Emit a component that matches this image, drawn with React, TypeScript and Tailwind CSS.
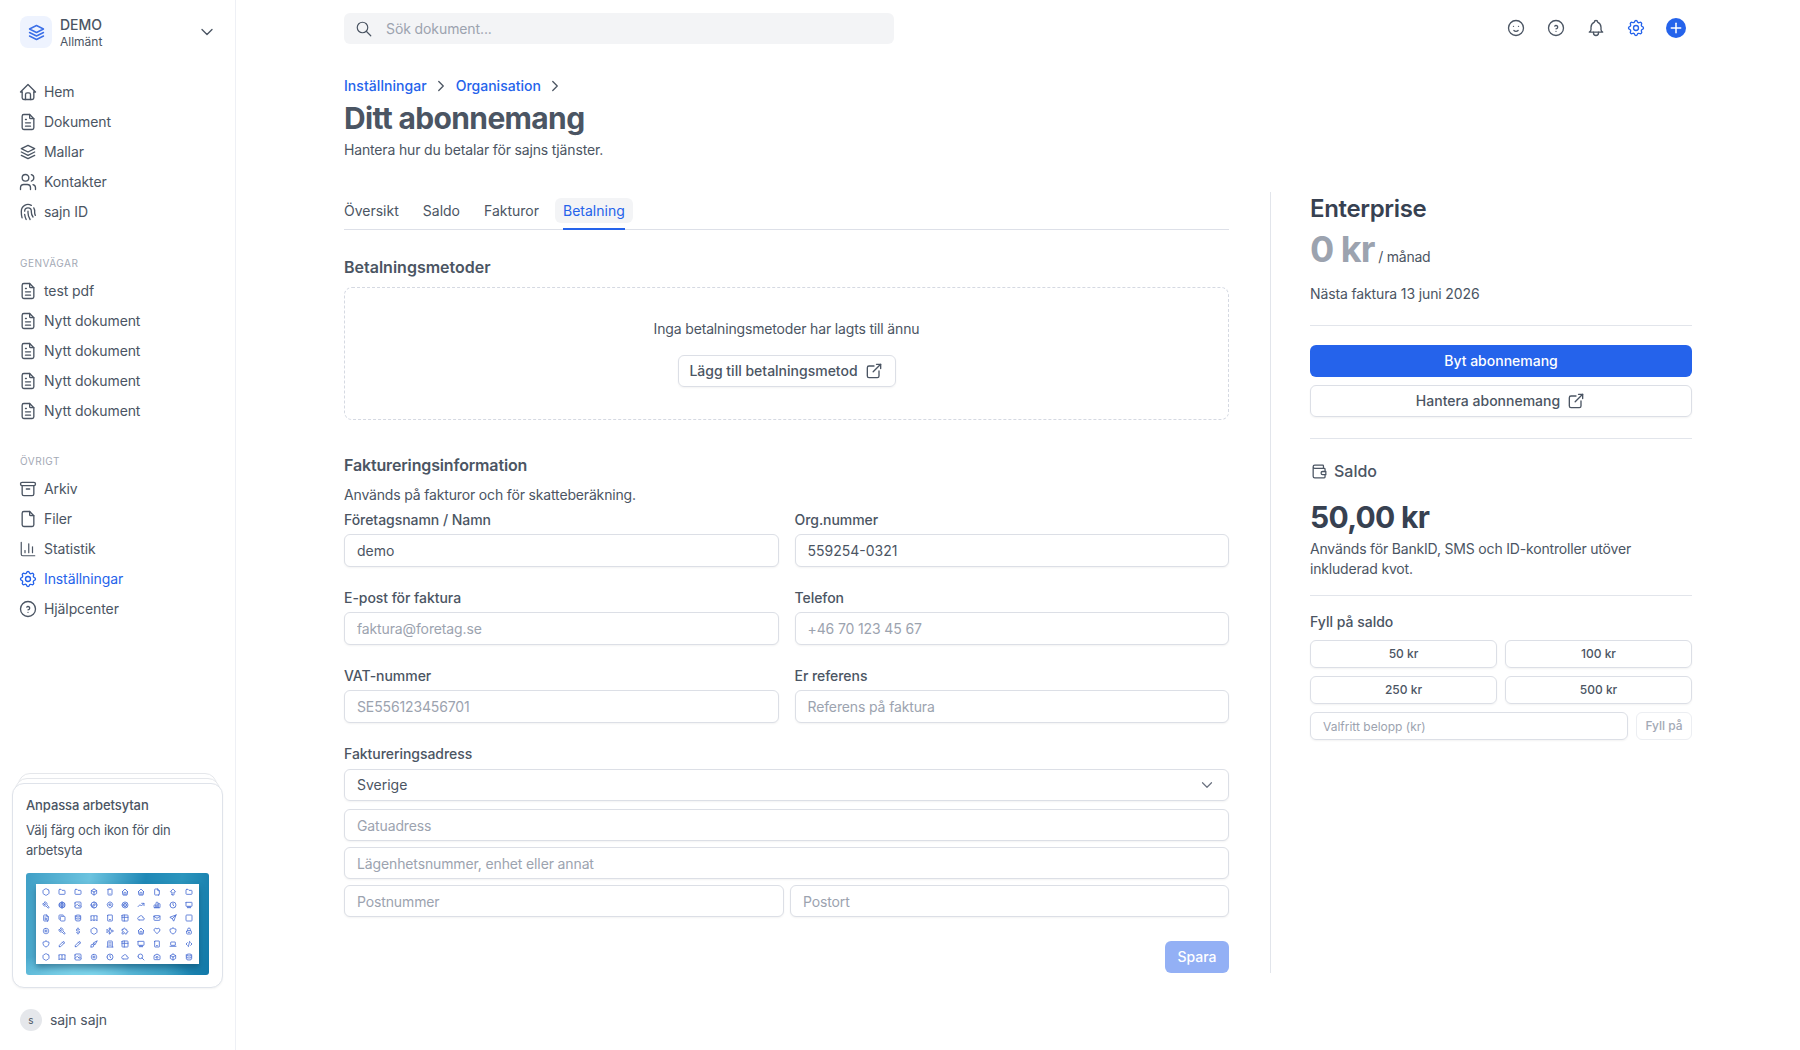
import {
  TbArchive,
  TbArrowBigUp,
  TbBell,
  TbBook,
  TbBox,
  TbBrush,
  TbBuilding,
  TbCamera,
  TbChartBar,
  TbChevronDown,
  TbChevronRight,
  TbClock,
  TbCloud,
  TbCode,
  TbCompass,
  TbCopy,
  TbCurrencyDollar,
  TbDatabase,
  TbDeviceDesktop,
  TbDeviceLaptop,
  TbDeviceMobile,
  TbDeviceTablet,
  TbExternalLink,
  TbFile,
  TbFileText,
  TbFingerprint,
  TbFolder,
  TbHeart,
  TbHelpCircle,
  TbHexagon,
  TbHome,
  TbLock,
  TbMail,
  TbMapPin,
  TbMoodSmile,
  TbPencil,
  TbPhoto,
  TbPlane,
  TbPlus,
  TbPuzzle,
  TbSearch,
  TbSend,
  TbSettings,
  TbShield,
  TbSquare,
  TbStack2,
  TbTable,
  TbTarget,
  TbTool,
  TbTrendingUp,
  TbUsers,
  TbWallet,
  TbWorld,
} from "react-icons/tb";
import { ChartColumn } from "lucide-react";

const mainNav = [
  { label: "Hem", icon: TbHome },
  { label: "Dokument", icon: TbFileText },
  { label: "Mallar", icon: TbStack2 },
  { label: "Kontakter", icon: TbUsers },
  { label: "sajn ID", icon: TbFingerprint },
];

const shortcuts = ["test pdf", "Nytt dokument", "Nytt dokument", "Nytt dokument", "Nytt dokument"];

const otherNav = [
  { label: "Arkiv", icon: TbArchive },
  { label: "Filer", icon: TbFile },
  { label: "Statistik", icon: ChartColumn },
  { label: "Inställningar", icon: TbSettings, active: true },
  { label: "Hjälpcenter", icon: TbHelpCircle },
];

const thumbIcons = [
  TbHexagon, TbFolder, TbFolder, TbBox, TbDeviceMobile, TbHome, TbHome, TbFile, TbArrowBigUp, TbFolder,
  TbTool, TbWorld, TbPhoto, TbCompass, TbMapPin, TbTarget, TbTrendingUp, TbChartBar, TbClock, TbDeviceDesktop,
  TbFileText, TbCopy, TbDatabase, TbBook, TbDeviceTablet, TbTable, TbCloud, TbMail, TbSend, TbSquare,
  TbSettings, TbTool, TbCurrencyDollar, TbHexagon, TbPlane, TbPuzzle, TbHome, TbHeart, TbShield, TbLock,
  TbShield, TbPencil, TbPencil, TbBrush, TbBuilding, TbTable, TbDeviceDesktop, TbDeviceTablet, TbDeviceLaptop, TbCode,
  TbHexagon, TbBook, TbPhoto, TbSettings, TbClock, TbCloud, TbSearch, TbCamera, TbBox, TbDatabase,
];

function NavItem({ label, icon: Icon, active }: { label: string; icon: any; active?: boolean }) {
  const small = Icon === ChartColumn;
  return (
    <a className={`flex h-[30px] items-center gap-[6px] text-sm tracking-[-0.1px] ${active ? "text-[#2563eb]" : "text-[#4b5563]"}`}>
      <span className="-ml-[2px] flex w-5 shrink-0 justify-center">
        <Icon size={small ? 18 : 20} strokeWidth={1.6} />
      </span>
      {label}
    </a>
  );
}

function SectionLabel({ children }: { children: string }) {
  return <div className="mt-[27px] mb-[5px] text-[10px] leading-4 tracking-[0.05em] text-[#a3a9b5]">{children}</div>;
}

function Sidebar() {
  return (
    <aside className="flex h-screen w-[236px] shrink-0 flex-col border-r border-[#eef0f5]">
      <div className="px-5 pt-4">
        <div className="flex h-8 items-center">
          <div className="flex h-8 w-8 items-center justify-center rounded-lg bg-[#eef3fe] text-[#3b6fe8]">
            <TbStack2 size={21} strokeWidth={1.6} />
          </div>
          <div className="ml-2 flex-1">
            <div className="text-sm leading-[18px] font-medium text-[#4b5563]">DEMO</div>
            <div className="mt-px text-xs leading-[14px] text-[#4b5563]">Allmänt</div>
          </div>
          <TbChevronDown size={20} strokeWidth={1.6} className="-mr-[2px] text-[#4b5563]" />
        </div>
        <nav className="mt-[29px]">
          {mainNav.map((item) => (
            <NavItem key={item.label} {...item} />
          ))}
        </nav>
        <div className="h-px" />
        <SectionLabel>GENVÄGAR</SectionLabel>
        {shortcuts.map((label, i) => (
          <NavItem key={i} label={label} icon={TbFileText} />
        ))}
        <SectionLabel>ÖVRIGT</SectionLabel>
        {otherNav.map((item) => (
          <NavItem key={item.label} {...item} />
        ))}
      </div>

      <div className="mt-auto px-3 pb-[19px]">
        <div className="relative">
          <div className="absolute -top-[10px] right-[6px] left-[6px] h-8 rounded-xl border border-[#e5e7eb] bg-white" />
          <div className="absolute -top-[5px] right-[3px] left-[3px] h-8 rounded-xl border border-[#e5e7eb] bg-white" />
          <div className="relative h-[205px] rounded-xl border border-[#dfe3ea] bg-white px-[13px] pt-[11px] shadow-xs">
            <div className="text-[13px] leading-5 font-medium tracking-[-0.1px] text-[#4b5563]">Anpassa arbetsytan</div>
            <p className="mt-[5px] text-[13px] leading-5 tracking-[-0.18px] text-[#4b5563]">Välj färg och ikon för din arbetsyta</p>
            <div className="mt-[13px] h-[102px] rounded-[3px] bg-[radial-gradient(ellipse_55%_22%_at_35%_100%,#7fd6ec_0%,transparent_100%),linear-gradient(100deg,#3f9fc6_0%,#6cc3df_32%,#1f88b6_60%,#2b95bd_78%,#1178a8_100%)] pt-[11px] pl-[10px]">
              <div className="grid h-[80px] w-[163px] grid-cols-10 grid-rows-6 items-center justify-items-center bg-white px-[2px] py-[1px] text-[#4a6fd4] shadow-[0_4px_6px_rgba(10,60,90,0.45)]">
                {thumbIcons.map((Icon, i) => (
                  <Icon key={i} size={8} strokeWidth={2.5} />
                ))}
              </div>
            </div>
          </div>
        </div>
        <div className="mt-[21px] flex h-[22px] items-center gap-2 pl-2">
          <div className="flex h-[22px] w-[22px] items-center justify-center rounded-full bg-[#e5e7eb] text-[10px] text-[#4b5563]">s</div>
          <span className="text-sm tracking-[-0.1px] text-[#4b5563]">sajn sajn</span>
        </div>
      </div>
    </aside>
  );
}

function TopBar() {
  return (
    <div className="flex h-[57px] items-center justify-between pr-[104px]">
      <div className="flex h-[31px] w-[550px] items-center gap-[13px] rounded-md bg-[#f3f4f6] pl-[11px] text-sm tracking-[-0.1px] text-[#9ca3af]">
        <TbSearch size={18} strokeWidth={1.6} className="text-[#4b5563]" />
        Sök dokument...
      </div>
      <div className="mb-[2px] flex text-[#4b5563]">
        <span className="flex h-10 w-10 items-center justify-center"><TbMoodSmile size={20} strokeWidth={1.6} /></span>
        <span className="flex h-10 w-10 items-center justify-center"><TbHelpCircle size={20} strokeWidth={1.6} /></span>
        <span className="flex h-10 w-10 items-center justify-center"><TbBell size={20} strokeWidth={1.6} /></span>
        <span className="flex h-10 w-10 items-center justify-center text-[#2563eb]"><TbSettings size={20} strokeWidth={1.6} /></span>
        <span className="flex h-10 w-10 items-center justify-center">
          <span className="flex h-5 w-5 items-center justify-center rounded-full bg-[#2563eb] text-white">
            <TbPlus size={16} strokeWidth={2.25} />
          </span>
        </span>
      </div>
    </div>
  );
}

function Tabs() {
  const tabs = ["Översikt", "Saldo", "Fakturor", "Betalning"];
  return (
    <div className="flex h-[38px] gap-6 border-b border-[#dde0e8]">
      {tabs.map((tab) => {
        const active = tab === "Betalning";
        return (
          <div key={tab} className={`h-[38px] border-b-2 pt-[6px] text-sm ${active ? "border-[#2563eb] text-[#2563eb]" : "border-transparent text-[#4b5563]"}`}>
            <span className={`-mx-2 block h-[25px] rounded-md px-2 leading-[26px] ${active ? "bg-[#f3f4f6]" : ""}`}>{tab}</span>
          </div>
        );
      })}
    </div>
  );
}

function TextInput({ placeholder, value, className = "h-[33px]" }: { placeholder?: string; value?: string; className?: string }) {
  return (
    <input
      readOnly
      placeholder={placeholder}
      value={value}
      className={`w-full rounded-md border border-[#dcdfe6] bg-white px-[12px] text-sm text-[#4b5563] shadow-xs outline-none placeholder:tracking-[-0.13px] placeholder:text-[#9ca3af] ${className}`}
    />
  );
}

function Field({ label, placeholder, value, className }: { label: string; placeholder?: string; value?: string; className?: string }) {
  return (
    <div className={className}>
      <div className="mb-[4px] text-sm leading-5 font-medium tracking-[-0.05px] text-[#4b5563]">{label}</div>
      <TextInput placeholder={placeholder} value={value} />
    </div>
  );
}

function BillingForm() {
  return (
    <div className="w-[885px] shrink-0">
      <Tabs />
      <h2 className="mt-[25px] text-base leading-6 font-semibold text-[#4b5563]">Betalningsmetoder</h2>
      <div className="mt-2 flex h-[133px] flex-col items-center rounded-lg border border-dashed border-[#d5d9e2] pt-[31px]">
        <p className="text-sm leading-5 tracking-[-0.16px] text-[#4b5563]">Inga betalningsmetoder har lagts till ännu</p>
        <button className="mt-4 flex h-8 w-[218px] items-center justify-center gap-[6px] rounded-md border border-[#dcdfe6] text-sm font-medium text-[#4b5563] shadow-xs">
          Lägg till betalningsmetod
          <TbExternalLink size={20} strokeWidth={1.6} />
        </button>
      </div>

      <h2 className="mt-[33px] text-base leading-6 font-semibold tracking-[-0.15px] text-[#4b5563]">Faktureringsinformation</h2>
      <p className="mt-2 text-sm leading-5 tracking-[-0.16px] text-[#4b5563]">Används på fakturor och för skatteberäkning.</p>

      <div className="mt-[5px] grid grid-cols-2 gap-x-4 gap-y-[21px]">
        <Field label="Företagsnamn / Namn" value="demo" />
        <Field label="Org.nummer" value="559254-0321" />
        <Field label="E-post för faktura" placeholder="faktura@foretag.se" />
        <Field label="Telefon" placeholder="+46 70 123 45 67" />
        <Field label="VAT-nummer" placeholder="SE556123456701" />
        <Field label="Er referens" placeholder="Referens på faktura" />
      </div>

      <div className="mt-[21px] mb-[5px] text-sm leading-5 font-medium tracking-[-0.05px] text-[#4b5563]">Faktureringsadress</div>
      <div className="flex h-8 items-center justify-between rounded-md border border-[#dcdfe6] px-[12px] text-sm text-[#4b5563] shadow-xs">
        Sverige
        <TbChevronDown size={18} strokeWidth={1.6} className="text-[#6b7280]" />
      </div>
      <TextInput placeholder="Gatuadress" className="mt-2 h-8" />
      <TextInput placeholder="Lägenhetsnummer, enhet eller annat" className="mt-[6px] h-8" />
      <div className="mt-[6px] flex gap-[6px]">
        <div className="w-[440px]"><TextInput placeholder="Postnummer" className="h-8" /></div>
        <div className="flex-1"><TextInput placeholder="Postort" className="h-8" /></div>
      </div>
      <div className="mt-6 flex justify-end">
        <button className="h-8 w-[64px] rounded-md bg-[#93b0f5] text-sm font-medium text-white">Spara</button>
      </div>
    </div>
  );
}

function AmountButton({ children }: { children: string }) {
  return <button className="h-7 rounded-md border border-[#dcdfe6] text-xs font-medium text-[#4b5563] shadow-xs">{children}</button>;
}

function PlanPanel() {
  return (
    <div className="ml-[41px] w-[422px] border-l border-[#e2e5eb] pt-px pl-[39px]">
      <h2 className="text-2xl leading-8 font-semibold tracking-[-0.35px] text-[#374151]">Enterprise</h2>
      <div className="mt-1 flex items-baseline gap-[4px]">
        <span className="text-4xl leading-10 font-bold tracking-[-1px] text-[#9ca3af]">0 kr</span>
        <span className="text-sm tracking-[-0.25px] text-[#4b5563]">/ månad</span>
      </div>
      <p className="mt-[15px] text-sm leading-5 tracking-[-0.13px] text-[#4b5563]">Nästa faktura 13 juni 2026</p>
      <hr className="mt-[21px] border-[#e2e5eb]" />
      <button className="mt-[19px] h-8 w-full rounded-md bg-[#2563eb] text-sm font-medium text-white">Byt abonnemang</button>
      <button className="mt-2 flex h-8 w-full items-center justify-center gap-[6px] rounded-md border border-[#dcdfe6] text-sm font-medium text-[#4b5563] shadow-xs">
        Hantera abonnemang
        <TbExternalLink size={20} strokeWidth={1.6} />
      </button>
      <hr className="mt-[21px] border-[#e2e5eb]" />

      <div className="mt-5 flex h-6 items-center gap-[5px] text-base font-medium text-[#4b5563]">
        <TbWallet size={19} strokeWidth={1.6} />
        Saldo
      </div>
      <div className="mt-4 text-3xl leading-9 font-bold tracking-[-0.7px] text-[#374151]">50,00 kr</div>
      <p className="mt-1 text-sm leading-5 tracking-[-0.18px] text-[#4b5563]">Används för BankID, SMS och ID-kontroller utöver inkluderad kvot.</p>
      <hr className="mt-4 border-[#e2e5eb]" />

      <div className="mt-4 text-sm leading-5 font-medium text-[#4b5563]">Fyll på saldo</div>
      <div className="mt-2 grid grid-cols-2 gap-2">
        <AmountButton>50 kr</AmountButton>
        <AmountButton>100 kr</AmountButton>
        <AmountButton>250 kr</AmountButton>
        <AmountButton>500 kr</AmountButton>
      </div>
      <div className="mt-2 flex gap-2">
        <input
          readOnly
          placeholder="Valfritt belopp (kr)"
          className="h-7 flex-1 rounded-md border border-[#dcdfe6] px-3 text-xs shadow-xs outline-none placeholder:text-[#9ca3af]"
        />
        <button className="h-7 w-[56px] rounded-md border border-[#eceef2] text-xs font-medium text-[#a3a9b5]">Fyll på</button>
      </div>
    </div>
  );
}

export default function App() {
  return (
    <div className="flex h-screen overflow-hidden bg-white font-['Inter',sans-serif]">
      <Sidebar />
      <main className="flex-1 pl-[108px]">
        <TopBar />
        <div className="mt-[19px] flex items-center gap-[5px] text-sm leading-5 font-medium text-[#2563eb]">
          <span className="tracking-[0.05px]">Inställningar</span>
          <TbChevronRight size={18} strokeWidth={1.75} className="text-[#4b5563]" />
          <span className="ml-px">Organisation</span>
          <TbChevronRight size={18} strokeWidth={1.75} className="text-[#4b5563]" />
        </div>
        <h1 className="mt-1 text-3xl leading-9 font-bold tracking-[-0.65px] text-[#4b5563]">Ditt abonnemang</h1>
        <p className="mt-1 text-sm leading-5 tracking-[-0.16px] text-[#4b5563]">Hantera hur du betalar för sajns tjänster.</p>
        <div className="mt-8 flex">
          <BillingForm />
          <PlanPanel />
        </div>
      </main>
    </div>
  );
}
